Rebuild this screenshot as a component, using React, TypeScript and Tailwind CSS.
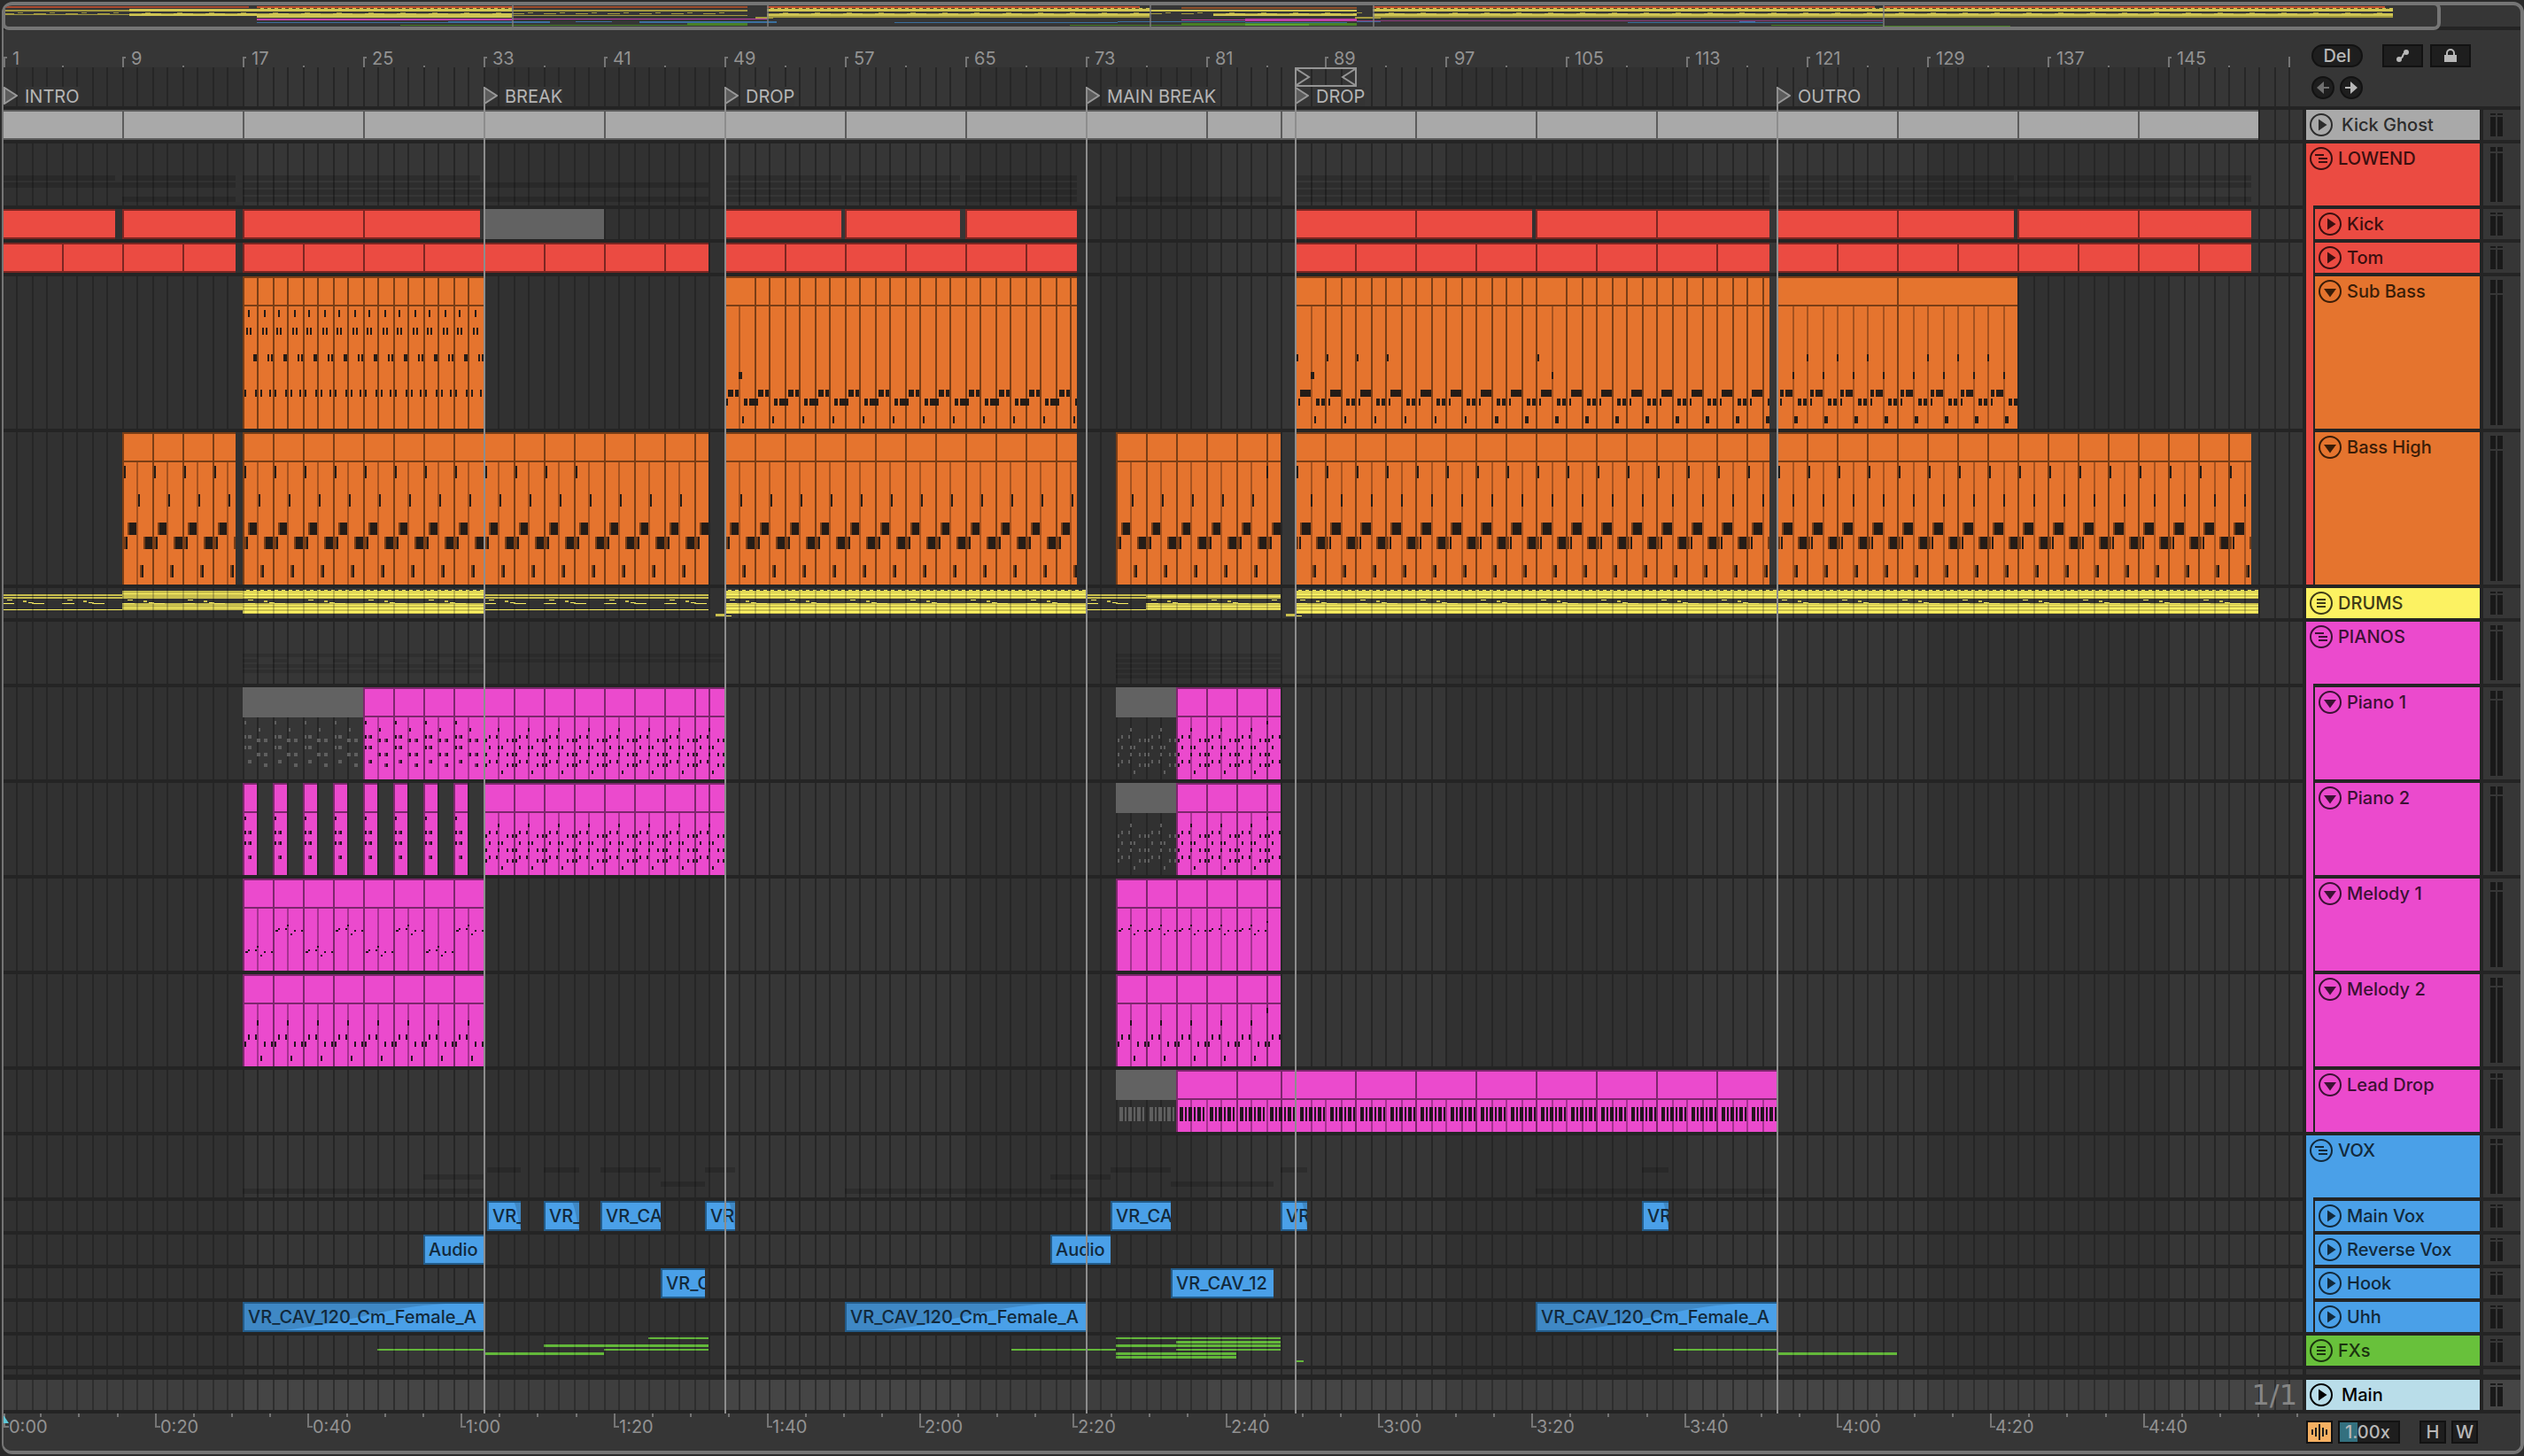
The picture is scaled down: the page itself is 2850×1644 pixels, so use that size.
import React from 'react';
import { clsx } from 'clsx';

type Box = [number, number, number, number];

interface Clip {
  start: number;
  end: number;
  // x positions of the dividers inside the clip
  cuts?: number[];
  muted?: boolean;
}

interface Palette {
  fill: string;
  edge: string;
  soft: string;
  note: string;
}

const LANE_LEFT = 4;
const LANE_WIDTH = 2596;
const BAR = 17;

// Bar number -> timeline x. The bar before 87 is two units short.
const barX = (bar: number) =>
  bar < 87 ? 2 * Math.floor((2 + BAR * (bar - 1)) / 2) : 2 * Math.ceil((BAR * (bar - 1)) / 2);

const pct = (x: number) => `${((x - LANE_LEFT) / LANE_WIDTH) * 100}%`;
const pctWidth = (w: number) => `${(w / LANE_WIDTH) * 100}%`;

const toPath = (boxes: Box[]) => boxes.map(([x, y, w, h]) => `M${x} ${y}h${w}v${h}h${-w}z`).join('');

const range = (from: number, to: number, step: number) => {
  const out: number[] = [];
  for (let x = from; x < to; x += step) out.push(x);
  return out;
};

const bars = range(1, 154, 1);
const gridPath = (h: number) => toPath(bars.map((b): Box => [barX(b), 0, 2, h]));
const bandPath = (h: number) =>
  toPath([17, 49, 81, 113, 145].map((b): Box => [barX(b), 0, b === 145 ? 152 : barX(b + 16) - barX(b), h]));

const palettes: Record<string, Palette> = {
  gray: { fill: '#a9a9a9', edge: '#5c5c5c', soft: '#7d7d7d', note: '#222222' },
  red: { fill: '#eb4b42', edge: '#7c2622', soft: '#a03630', note: '#222222' },
  orange: { fill: '#e5742e', edge: '#7a3e16', soft: '#a5521f', note: '#241c17' },
  pink: { fill: '#eb4acd', edge: '#7d276d', soft: '#a63391', note: '#24141f' },
};

const LaneGrid = ({ h, main = false }: { h: number; main?: boolean }) => (
  <>
    <rect x={0} y={0} width={2600} height={h} fill={main ? '#3e3e3e' : '#313131'} />
    <path d={bandPath(h)} fill={main ? '#454545' : '#363636'} />
    <path d={gridPath(h)} fill={main ? '#2e2e2e' : '#262626'} />
  </>
);

interface LaneProps {
  h: number;
  height: string;
  main?: boolean;
  children?: React.ReactNode;
  overlay?: React.ReactNode;
}

const Lane = ({ h, height, main, children, overlay }: LaneProps) => (
  <div className={clsx('relative w-full overflow-hidden', height)}>
    <svg
      className="block h-full w-full"
      viewBox={`${LANE_LEFT} 0 ${LANE_WIDTH} ${h}`}
      preserveAspectRatio="none"
      shapeRendering="crispEdges"
      aria-hidden="true"
    >
      <LaneGrid h={h} main={main} />
      {children}
    </svg>
    {overlay}
  </div>
);

// Folded audio clips: a filled block with dark edges
const FlatClips = ({ clips, palette }: { clips: Clip[]; palette: Palette }) => (
  <>
    {clips.map((c) =>
      c.muted ? (
        <rect key={c.start} x={c.start} y={0} width={c.end - c.start} height={34} fill="#626262" />
      ) : (
        <g key={c.start}>
          <rect x={c.start} y={0} width={c.end - c.start} height={34} fill={palette.edge} />
          <rect x={c.start + 2} y={2} width={c.end - c.start - 2} height={30} fill={palette.fill} />
          <path d={toPath((c.cuts ?? []).map((x): Box => [x, 2, 2, 30]))} fill={palette.edge} />
        </g>
      ),
    )}
  </>
);

interface NoteClipsProps {
  clips: Clip[];
  h: number;
  palette: Palette;
  notes: Box[];
  shades?: Box[];
}

const clipNotes = (boxes: Box[], clip: Clip) =>
  boxes
    .filter(([x]) => x >= clip.start && x < clip.end)
    .map(([x, y, w, hh]): Box => [x, y, Math.min(w, clip.end - x), hh]);

// Unfolded MIDI clips: title strip on top, notes under it
const NoteClips = ({ clips, h, palette, notes, shades = [] }: NoteClipsProps) => (
  <>
    {clips.map((c) => {
      const w = c.end - c.start;
      const inner = bars.map(barX).filter((x) => x > c.start && x < c.end);
      return c.muted ? (
        <g key={c.start}>
          <rect x={c.start} y={0} width={w} height={34} fill="#626262" />
          <path d={toPath(clipNotes([...shades, ...notes], c))} fill="#5f5f5f" />
        </g>
      ) : (
        <g key={c.start}>
          <rect x={c.start} y={0} width={w} height={h} fill={palette.edge} />
          <rect x={c.start + 2} y={2} width={w - 2} height={h - 2} fill={palette.fill} />
          <path d={toPath(inner.map((x): Box => [x, 34, 2, h - 34]))} fill={palette.soft} />
          <path d={toPath((c.cuts ?? []).map((x): Box => [x, 2, 2, h - 2]))} fill={palette.edge} />
          <rect x={c.start} y={32} width={w} height={2} fill={palette.edge} />
          <path d={toPath(clipNotes(shades, c))} fill={palette.edge} />
          <path d={toPath(clipNotes(notes, c))} fill={palette.note} />
        </g>
      );
    })}
  </>
);

// Repeats a two-bar pattern from one x to another
const repeat = (pattern: Box[], from: number, to: number): Box[] =>
  range(from, to, BAR * 2).flatMap((x0) => pattern.map(([x, y, w, h]): Box => [x0 + x, y, w, h]));

const at = (y: number, h: number, xs: [number, number][]): Box[] => xs.map(([x, w]): Box => [x, y, w, h]);

const pairCuts = (from: number, to: number) => range(from + 34, to, 34);

/* ---- Kick Ghost / Kick / Tom ---- */
const ghostClips: Clip[] = [
  { start: 2, end: 1462, cuts: [...range(138, 1400, 136), 1446] },
  { start: 1462, end: 2550, cuts: range(1598, 2500, 136) },
];

const kickClips: Clip[] = [
  { start: 2, end: 130 },
  { start: 138, end: 266 },
  { start: 274, end: 542, cuts: [410] },
  { start: 546, end: 682, muted: true },
  { start: 818, end: 950 },
  { start: 954, end: 1084 },
  { start: 1090, end: 1216 },
  { start: 1462, end: 1730, cuts: [1598] },
  { start: 1734, end: 1998, cuts: [1870] },
  { start: 2006, end: 2274, cuts: [2142] },
  { start: 2278, end: 2542, cuts: [2414] },
];

const tomClips: Clip[] = [[2, 266], [274, 800], [818, 1216], [1462, 1998], [2006, 2542]].map(([start, end]) => ({
  start,
  end,
  cuts: range(start + 68, end, 68),
}));

/* ---- Sub Bass ---- */
const barCuts = (from: number, to: number) => bars.map(barX).filter((x) => x > from && x < to);

const subClips: Clip[] = [
  { start: 274, end: 546, cuts: barCuts(274, 546) },
  { start: 818, end: 1216, cuts: barCuts(836, 1216) },
  { start: 1462, end: 1998, cuts: barCuts(1482, 1998).filter((x) => x !== 1752) },
  { start: 2006, end: 2278, cuts: [2142] },
];

const subNotes: Box[] = [
  ...repeat(
    [
      ...at(38, 8, [[6, 2], [24, 2]]),
      ...at(58, 8, [[4, 2], [8, 2], [22, 2], [26, 2]]),
      ...at(88, 8, [[12, 4], [28, 2], [32, 2]]),
      ...at(128, 8, [[2, 2], [14, 2], [20, 2], [30, 2]]),
    ],
    274,
    546,
  ),
  ...at(108, 8, [[834, 4]]),
  ...at(138, 8, [[820, 2]]),
  ...repeat(
    [...at(128, 8, [[4, 6], [12, 4]]), ...at(138, 8, [[22, 4], [28, 10]]), ...at(158, 8, [[20, 2]])],
    818,
    1216,
  ),
  ...at(88, 8, [[1464, 2], [1498, 2], [1532, 2], [1566, 2], [1736, 2]]),
  ...at(108, 8, [[1480, 4], [1752, 2]]),
  ...repeat([...at(128, 8, [[6, 12]]), ...at(138, 8, [[4, 2], [24, 4], [30, 4]])], 1462, 1998),
  ...range(1484, 1688, 34).map((x): Box => [x, 158, 2, 8]),
  ...range(1688, 1998, 34).map((x): Box => [x, 158, 4, 8]),
  ...at(88, 8, [[2040, 2], [2074, 2], [2108, 2], [2176, 2], [2210, 2], [2244, 2]]),
  ...repeat(
    [
      ...at(108, 8, [[18, 2]]),
      ...at(128, 8, [[4, 4], [10, 8]]),
      ...at(138, 8, [[4, 2], [24, 4], [30, 4]]),
      ...at(158, 8, [[20, 4]]),
    ],
    2006,
    2278,
  ),
];

/* ---- Bass High ---- */
const highClips: Clip[] = [[138, 266], [274, 800], [818, 1216], [1260, 1446], [1462, 1998], [2006, 2542]].map(
  ([start, end]) => ({ start, end, cuts: pairCuts(start, end) }),
);

const highEarly: Box[] = [
  ...at(70, 14, [[18, 2]]),
  ...at(102, 14, [[8, 8]]),
  ...at(118, 14, [[4, 2], [26, 8]]),
  ...at(150, 14, [[22, 2]]),
];
const highLate: Box[] = [
  ...at(70, 14, [[18, 2]]),
  ...at(102, 14, [[8, 10]]),
  ...at(118, 14, [[5, 2], [26, 8]]),
  ...at(150, 14, [[22, 2]]),
];
const highShade: Box[] = [
  ...at(102, 14, [[6, 2]]),
  ...at(118, 14, [[2, 2], [24, 2]]),
  ...at(150, 14, [[20, 2]]),
];

const highNotes: Box[] = [
  ...repeat(highEarly, 138, 266),
  ...repeat(highEarly, 274, 800),
  ...repeat(highEarly, 818, 1216),
  ...repeat(highEarly, 1260, 1446),
  ...repeat(highLate, 1462, 1998),
  ...repeat(highLate, 2006, 2542),
  ...[
    ...range(140, 266, 34),
    ...range(276, 660, 34),
    1430,
    ...range(1464, 1998, 34),
    ...range(2008, 2542, 34),
  ].map((x): Box => [x, 38, 2, 14]),
];
const highShades: Box[] = [138, 274, 818, 1260, 1462, 2006].flatMap((x, i) =>
  repeat(highShade, x, highClips[i].end),
);

/* ---- Pianos ---- */
const chordA: Box[] = [
  ...at(38, 4, [[2, 2]]),
  ...at(46, 4, [[18, 2]]),
  ...at(54, 4, [[2, 2], [8, 2]]),
  ...at(58, 4, [[18, 2], [26, 2]]),
  ...at(66, 4, [[2, 2], [8, 2]]),
  ...at(74, 4, [[18, 2], [26, 2]]),
  ...at(82, 4, [[8, 2]]),
  ...at(86, 4, [[26, 2]]),
];
const chordAShade: Box[] = [
  ...at(54, 4, [[6, 2]]),
  ...at(58, 4, [[16, 2], [24, 2]]),
  ...at(66, 4, [[6, 2]]),
  ...at(74, 4, [[16, 2], [24, 2]]),
  ...at(82, 4, [[6, 2]]),
  ...at(86, 4, [[24, 2]]),
];
const chordB: Box[] = [
  ...at(46, 4, [[16, 2]]),
  ...at(54, 4, [[6, 2], [14, 2]]),
  ...at(58, 4, [[2, 2], [26, 2], [32, 2]]),
  ...at(66, 4, [[6, 2], [16, 2], [20, 2]]),
  ...at(74, 4, [[2, 2], [16, 2], [26, 2], [32, 2]]),
  ...at(82, 4, [[6, 2], [14, 2]]),
  ...at(86, 4, [[2, 2], [26, 2], [32, 2]]),
  ...at(94, 4, [[20, 2]]),
];

const pianoNotes: Box[] = [
  ...repeat(chordA, 274, 546),
  ...repeat(chordB, 546, 818),
  ...repeat(chordB, 1260, 1446),
  [1430, 38, 2, 4],
];
const pianoShades = repeat(chordAShade, 274, 546);

const piano1Clips: Clip[] = [
  { start: 274, end: 410, muted: true },
  { start: 410, end: 818, cuts: [...pairCuts(410, 818), 800] },
  { start: 1260, end: 1328, muted: true },
  { start: 1328, end: 1446, cuts: pairCuts(1328, 1446) },
];
const piano2Clips: Clip[] = [
  ...range(274, 546, 34).map((x) => ({ start: x, end: x + 16 })),
  { start: 546, end: 818, cuts: [...pairCuts(546, 818), 800] },
  { start: 1260, end: 1328, muted: true },
  { start: 1328, end: 1446, cuts: pairCuts(1328, 1446) },
];

const melodyClips: Clip[] = [
  { start: 274, end: 546, cuts: pairCuts(274, 546) },
  { start: 1260, end: 1446, cuts: pairCuts(1260, 1446) },
];
const riff = (y: number): Box[] => [
  ...at(y, 2, [[3, 3], [24, 2], [32, 2]]),
  ...at(y - 2, 2, [[6, 2], [14, 2]]),
  ...at(y - 6, 2, [[16, 2]]),
  ...at(y + 4, 2, [[20, 2]]),
];
const melody1Notes: Box[] = [
  ...range(274, 546, 68).flatMap((x) => [...repeat(riff(82), x, x + 34), ...repeat(riff(58), x + 34, x + 68)]),
  ...repeat(riff(58), 1260, 1430),
  [1430, 48, 2, 2],
];
const stabs: Box[] = [
  ...at(52, 6, [[16, 2]]),
  ...at(68, 6, [[6, 2], [14, 2]]),
  ...at(76, 6, [[2, 2], [24, 2], [32, 2]]),
  ...at(92, 6, [[20, 2]]),
];
const melody2Notes: Box[] = [...repeat(stabs, 274, 546), ...repeat(stabs, 1260, 1446), [1430, 38, 2, 6]];

const leadClips: Clip[] = [
  { start: 1260, end: 1328, muted: true },
  { start: 1328, end: 2006, cuts: [1396, 1446, ...range(1530, 2000, 68)] },
];
const leadNotes: Box[] = repeat(
  at(42, 16, [[4, 4], [10, 2], [14, 4], [20, 2], [24, 4], [30, 2]]),
  1260,
  2006,
);

/* ---- Vox ---- */
interface AudioClip {
  start: number;
  end: number;
  name: string;
  fade?: 'in' | 'out';
}

const mainVox: AudioClip[] = [
  { start: 550, end: 588, name: 'VR_', fade: 'out' },
  { start: 614, end: 654, name: 'VR_', fade: 'out' },
  { start: 678, end: 746, name: 'VR_CA' },
  { start: 796, end: 830, name: 'VR', fade: 'out' },
  { start: 1254, end: 1322, name: 'VR_CA' },
  { start: 1446, end: 1476, name: 'VR', fade: 'out' },
  { start: 1854, end: 1884, name: 'VR', fade: 'out' },
];
const reverseVox: AudioClip[] = [
  { start: 478, end: 546, name: 'Audio' },
  { start: 1186, end: 1254, name: 'Audio' },
];
const hookVox: AudioClip[] = [
  { start: 746, end: 796, name: 'VR_C' },
  { start: 1322, end: 1438, name: 'VR_CAV_12' },
];
const uhhVox: AudioClip[] = [274, 954, 1734].map((start) => ({
  start,
  end: start + 272,
  name: 'VR_CAV_120_Cm_Female_A',
  fade: 'in',
}));

const AudioClips = ({ clips }: { clips: AudioClip[] }) => (
  <>
    {clips.map((c) => (
      <div
        key={c.start}
        className="absolute inset-y-0 overflow-hidden border-y-2 border-l-2 border-[#235c8a] bg-[#4aa0e8]"
        style={{ left: pct(c.start), width: pctWidth(c.end - c.start) }}
      >
        {c.fade && (
          <svg className="absolute inset-0 h-full w-full" viewBox="0 0 100 30" preserveAspectRatio="none" aria-hidden="true">
            <path
              d={c.fade === 'in' ? 'M0 0H84C58 4 44 22 16 30H0Z' : 'M80 0H100V30C94 24 90 8 80 0Z'}
              fill="#3f88c5"
            />
          </svg>
        )}
        <span className="relative block pl-1 text-xl leading-[30px] font-medium whitespace-nowrap text-[#12293b]">
          {c.name}
        </span>
      </div>
    ))}
  </>
);

/* ---- Folded group lanes ---- */
const drumSections: { from: number; to: number; kind: 'thin' | 'mid' | 'full' | 'block' }[] = [
  { from: 2, to: 138, kind: 'thin' },
  { from: 138, to: 274, kind: 'mid' },
  { from: 274, to: 546, kind: 'full' },
  { from: 546, to: 800, kind: 'thin' },
  { from: 818, to: 1226, kind: 'full' },
  { from: 1226, to: 1294, kind: 'thin' },
  { from: 1294, to: 1446, kind: 'block' },
  { from: 1462, to: 2550, kind: 'full' },
];

const drumBoxes = (): { dim: Box[]; lit: Box[] } => {
  const dim: Box[] = [];
  const lit: Box[] = [];
  drumSections.forEach(({ from, to, kind }) => {
    const w = to - from;
    if (kind === 'thin') {
      dim.push([from, 7, w, 2], [from, 10, w, 2]);
      lit.push([from, 24, w, 1]);
      range(from, to, 34).forEach((x) => lit.push([x, 17, Math.min(14, to - x), 1]));
    }
    if (kind === 'mid') {
      dim.push([from, 3, w, 9], [from, 17, w, 8]);
      lit.push([from, 6, w, 1], [from, 22, w, 1]);
    }
    if (kind === 'block') {
      dim.push([from, 7, w, 5], [from, 17, w, 8]);
      lit.push([from, 9, w, 1], [from, 20, w, 1], [from, 23, w, 1]);
    }
    if (kind === 'full') {
      dim.push([from, 3, w, 9], [from, 17, w, 12]);
      lit.push([from, 4, w, 1], [from, 6, w, 2], [from, 10, w, 1]);
      lit.push([from, 19, w, 1], [from, 22, w, 2], [from, 26, w, 2]);
      range(from + 4, to, 8).forEach((x) => lit.push([x, 2, 4, 1]));
    }
    if (kind !== 'thin') range(from, to, 34).forEach((x) => lit.push([x, 17, Math.min(14, to - x), 1]));
    range(from + 6, to, 68).forEach((x) => {
      lit.push([x, 13, Math.min(6, to - x), 1]);
      if (x + 30 < to) {
        dim.push([x + 18, 14, 4, 2]);
        lit.push([x + 24, 16, 6, 1]);
      }
    });
  });
  [808, 1452].forEach((x) => {
    dim.push([x, 29, 12, 3]);
    lit.push([x + 10, 31, 8, 1]);
  });
  return { dim, lit };
};

const drums = drumBoxes();

const fxLines: Box[] = [
  [426, 15, 120, 2], [548, 19, 134, 3], [614, 10, 186, 3], [682, 15, 118, 2], [732, 2, 68, 2],
  [1142, 15, 118, 2], [1260, 2, 186, 2], [1328, 6, 118, 3], [1260, 10, 186, 3], [1328, 15, 118, 2],
  [1260, 19, 136, 3], [1260, 23, 136, 3], [1464, 28, 8, 2], [1890, 15, 116, 2], [2008, 19, 134, 3],
];

const shadow = (clips: { start: number; end: number }[], y: number, h: number): Box[] =>
  clips.map((c): Box => [c.start, y, c.end - c.start, h]);

const lowendShadow = toPath([
  ...shadow(kickClips.filter((c) => !c.muted), 36, 6),
  ...shadow(tomClips, 44, 6),
  ...shadow(subClips, 52, 6),
  ...shadow(highClips, 60, 6),
]);
const pianoShadow = toPath([
  ...shadow(piano1Clips, 36, 4),
  ...shadow(piano2Clips, 42, 4),
  ...shadow(melodyClips, 48, 4),
  ...shadow(melodyClips, 54, 4),
  ...shadow(leadClips, 60, 4),
]);
const voxShadow = toPath([
  ...shadow(mainVox, 36, 6),
  ...shadow(reverseVox, 44, 6),
  ...shadow(hookVox, 52, 6),
  ...shadow(uhhVox, 60, 6),
]);

/* ---- Overview ---- */
const overX = (bar: number) => 2 + 18 * (bar - 1);

const overview: [string, number, number, number, number][] = [
  // colour, from bar, to bar, y, height
  ['#a9492f', 1, 16.5, 1, 2],
  ['#c4522f', 17, 33, 1, 3],
  ['#9b4a2b', 33, 47.8, 1, 2],
  ['#c4522f', 49, 72.4, 1, 2],
  ['#8e4f2a', 75, 86, 2, 2],
  ['#c4522f', 87, 118.5, 1, 2],
  ['#c4522f', 119, 150.5, 1, 2],
  ['#a39a40', 1, 9, 5, 2], ['#a39a40', 1, 9, 10, 1],
  ['#cfc553', 9, 17, 4, 3], ['#cfc553', 9, 17, 9, 3],
  ['#cfc553', 17, 33, 3, 4], ['#cfc553', 17, 33, 9, 5],
  ['#a39a40', 33, 47.8, 5, 2], ['#a39a40', 33, 47.8, 11, 1],
  ['#cfc553', 49, 73, 3, 4], ['#cfc553', 49, 73, 9, 4], ['#a39a40', 49, 73, 12, 2],
  ['#cfc553', 73, 86, 5, 2], ['#cfc553', 77, 86, 9, 3],
  ['#cfc553', 87, 151, 3, 4], ['#cfc553', 87, 151, 9, 4], ['#a39a40', 87, 151, 12, 2],
  ['#a39a40', 48.3, 49.4, 13, 2], ['#a39a40', 85.9, 87.5, 13, 2],
  ['#c23fa8', 17, 33, 15, 2], ['#c23fa8', 33, 49, 15, 1],
  ['#c23fa8', 75, 79, 16, 1], ['#c23fa8', 79, 86, 15, 3], ['#8b3a7b', 86, 119, 17, 1],
  ['#3a6f9e', 17, 29, 19, 1], ['#3a6f9e', 29, 35.4, 18, 2], ['#3a6f9e', 37, 39.3, 18, 1],
  ['#3a6f9e', 41, 49.6, 18, 2], ['#3a6f9e', 57, 71, 19, 1], ['#3a6f9e', 71, 79, 18, 1],
  ['#3a6f9e', 79, 85.4, 19, 1], ['#3a6f9e', 86, 87.5, 18, 1], ['#3a6f9e', 103, 119, 19, 1], ['#3a6f9e', 110, 111, 18, 1],
  ['#487f25', 26, 33, 22, 1], ['#487f25', 33, 47.8, 22, 1], ['#487f25', 44, 47.8, 20, 3],
  ['#487f25', 68, 75, 22, 1], ['#487f25', 75, 86, 20, 3], ['#5ba32d', 79, 83, 21, 2],
  ['#487f25', 112, 119, 22, 1], ['#487f25', 119, 127, 23, 1],
];

const Overview = () => (
  <div className="relative h-7 border-b-4 border-[#242424]">
    <div className="mr-[94px] h-6">
      <svg className="block h-full w-full" viewBox="4 0 2748 24" preserveAspectRatio="none" shapeRendering="crispEdges" aria-hidden="true">
        {overview.map(([color, from, to, y, h], i) => (
          <rect key={i} x={overX(from)} y={y} width={18 * (to - from)} height={h} fill={color} />
        ))}
        <path
          d={toPath(
            [[17, 33], [49, 73], [87, 151]].flatMap(([from, to]) =>
              range(overX(from), overX(to), 8).map((x): Box => [x, 3, 4, 1]),
            ),
          )}
          fill="#4a4320"
        />
        <path
          d={toPath(
            [[1, 47], [49, 86], [87, 150]].flatMap(([from, to]) =>
              range(overX(from), overX(to), 36).flatMap((x): Box[] => [[x, 9, 14, 1], [x + 18, 8, 6, 1]]),
            ),
          )}
          fill="#a39a40"
        />
        <path d={toPath([33, 49, 73, 87, 119].map((b): Box => [overX(b), 0, 2, 24]))} fill="#808080" fillOpacity={0.7} />
      </svg>
    </div>
    <div className="absolute -top-1 right-[90px] -bottom-1 -left-0.5 rounded-lg border-4 border-[#757575]" />
  </div>
);

/* ---- Rulers ---- */
const locators = [
  { bar: 1, name: 'INTRO' },
  { bar: 33, name: 'BREAK' },
  { bar: 49, name: 'DROP' },
  { bar: 73, name: 'MAIN BREAK' },
  { bar: 87, name: 'DROP' },
  { bar: 119, name: 'OUTRO' },
];

const numbered = range(1, 146, 8);
const minor = range(5, 152, 8);

const BarRuler = () => (
  <div className="min-w-0 flex-1">
    <div className="relative h-[42px] text-xl text-[#929292]">
      {numbered.map((b) => (
        <div
          key={b}
          className="absolute bottom-0 h-3 border-l-2 border-[#757575]"
          style={{ left: pct(Math.max(barX(b), 4)) }}
        >
          <div className="h-0.5 w-0.5 bg-[#757575]" />
          <span className="absolute -top-2 left-2 leading-5">{b}</span>
        </div>
      ))}
      <div className="absolute bottom-0 h-3 border-l-2 border-[#757575]" style={{ left: pct(barX(153)) }} />
      {minor.map((b) => (
        <div key={b} className="absolute bottom-0 h-0.5 w-0.5 bg-[#757575]" style={{ left: pct(barX(b)) }} />
      ))}
    </div>
    <Lane
      h={44}
      height="h-11"
      overlay={
        <>
          <div
            className="absolute top-0 flex h-[22px] justify-between border-2 border-[#959595]"
            style={{ left: pct(1462), width: pctWidth(70) }}
          >
            <svg className="h-full w-4" viewBox="0 0 16 18" fill="none" stroke="#959595" strokeWidth="2" aria-hidden="true">
              <path d="M0 0L14 9L0 18" />
            </svg>
            <svg className="h-full w-4" viewBox="0 0 16 18" fill="none" stroke="#959595" strokeWidth="2" aria-hidden="true">
              <path d="M16 0L2 9L16 18" />
            </svg>
          </div>
          {locators.map((l) => (
            <button
              key={l.bar}
              type="button"
              className="absolute top-[22px] flex items-start gap-2"
              style={{ left: pct(Math.max(barX(l.bar), 4)) }}
            >
              <svg className="h-5 w-4" viewBox="0 0 16 20" aria-hidden="true">
                <path d="M1 1L15 10L1 19Z" fill="#5c5c5c" stroke="#999999" strokeWidth="2" />
              </svg>
              <span className="bg-[#343434] text-xl leading-[22px] text-[#b5b5b5]">{l.name}</span>
            </button>
          ))}
        </>
      }
    />
  </div>
);

const TimeRuler = () => {
  const timeX = (seconds: number) => 2 + (seconds / 20) * 172.7;
  const label = (s: number) => `${Math.floor(s / 60)}:${String(s % 60).padStart(2, '0')}`;
  return (
    <div className="relative h-[42px] min-w-0 flex-1 bg-[#363636] text-xl text-[#929292]">
      {range(0, 301, 5).map((s) =>
        s % 20 === 0 && s < 300 ? (
          <div
            key={s}
            className="absolute top-0 h-4 border-l-2 border-[#757575]"
            style={{ left: pct(Math.max(Math.round(timeX(s)), 4)) }}
          >
            <div className="absolute bottom-0 h-0.5 w-1 bg-[#757575]" />
            <span className="absolute top-[3px] left-1 leading-6">{label(s)}</span>
          </div>
        ) : (
          <div key={s} className="absolute top-0 h-1 w-0.5 bg-[#757575]" style={{ left: pct(Math.round(timeX(s))) }} />
        ),
      )}
      <svg className="absolute top-0.5 left-0 h-2.5 w-1.5" viewBox="0 0 6 10" aria-hidden="true">
        <path d="M0 0L6 9H0Z" fill="#5ec8d8" />
      </svg>
    </div>
  );
};

/* ---- Icons ---- */
type IconKind = 'play' | 'unfold' | 'group' | 'list';

const TrackIcon = ({ kind }: { kind: IconKind }) => (
  <svg className="size-[26px] shrink-0" viewBox="0 0 26 26" fill="none" stroke="currentColor" strokeWidth="2" aria-hidden="true">
    <circle cx="13" cy="13" r="12" />
    {kind === 'play' && <path d="M10 6.5V19.5L19.5 13Z" fill="currentColor" stroke="none" />}
    {kind === 'unfold' && <path d="M6 10H20L13 19.5Z" fill="currentColor" stroke="none" />}
    {kind === 'group' && <path d="M6 9H16M10 13H20M10 17H20" />}
    {kind === 'list' && <path d="M8 9H18M8 13H18M8 17H18" />}
  </svg>
);

/* ---- Track headers ---- */
interface Track {
  name: string;
  icon: IconKind;
  height: string;
  color: string;
  wide?: boolean;
}

interface Group extends Track {
  children?: Track[];
}

const RED = 'bg-[#eb4b42] text-[#3b0f0f]';
const ORANGE = 'bg-[#e5742e] text-[#3a1d08]';
const PINK = 'bg-[#eb4acd] text-[#3c1134]';
const BLUE = 'bg-[#4aa0e8] text-[#12293b]';

const groups: Group[] = [
  { name: 'Kick Ghost', icon: 'play', height: 'h-[34px]', color: 'bg-[#a9a9a9] text-[#2c2c2c]', wide: true },
  {
    name: 'LOWEND',
    icon: 'group',
    height: 'h-[70px]',
    color: RED,
    children: [
      { name: 'Kick', icon: 'play', height: 'h-[34px]', color: RED },
      { name: 'Tom', icon: 'play', height: 'h-[34px]', color: RED },
      { name: 'Sub Bass', icon: 'unfold', height: 'h-[172px]', color: ORANGE },
      { name: 'Bass High', icon: 'unfold', height: 'h-[172px]', color: ORANGE },
    ],
  },
  { name: 'DRUMS', icon: 'list', height: 'h-[34px]', color: 'bg-[#fcf262] text-[#3e3b17]' },
  {
    name: 'PIANOS',
    icon: 'group',
    height: 'h-[70px]',
    color: PINK,
    children: [
      { name: 'Piano 1', icon: 'unfold', height: 'h-[104px]', color: PINK },
      { name: 'Piano 2', icon: 'unfold', height: 'h-[104px]', color: PINK },
      { name: 'Melody 1', icon: 'unfold', height: 'h-[104px]', color: PINK },
      { name: 'Melody 2', icon: 'unfold', height: 'h-[104px]', color: PINK },
      { name: 'Lead Drop', icon: 'unfold', height: 'h-[70px]', color: PINK },
    ],
  },
  {
    name: 'VOX',
    icon: 'group',
    height: 'h-[70px]',
    color: BLUE,
    children: [
      { name: 'Main Vox', icon: 'play', height: 'h-[34px]', color: BLUE },
      { name: 'Reverse Vox', icon: 'play', height: 'h-[34px]', color: BLUE },
      { name: 'Hook', icon: 'play', height: 'h-[34px]', color: BLUE },
      { name: 'Uhh', icon: 'play', height: 'h-[34px]', color: BLUE },
    ],
  },
  { name: 'FXs', icon: 'list', height: 'h-[34px]', color: 'bg-[#68c13b] text-[#1b330f]' },
];

const mainTrack: Track = {
  name: 'Main',
  icon: 'play',
  height: 'h-[34px]',
  color: 'bg-[#b9dde9] text-black',
  wide: true,
};

const TrackHeader = ({ track }: { track: Track }) => (
  <div className={clsx('flex items-start p-1 font-medium', track.wide ? 'gap-2.5' : 'gap-1.5', track.height, track.color)}>
    <button type="button" aria-label={`Fold ${track.name}`}>
      <TrackIcon kind={track.icon} />
    </button>
    <span className="text-xl leading-[26px] whitespace-nowrap">{track.name}</span>
  </div>
);

const Headers = () => (
  <div className="flex w-[196px] shrink-0 flex-col gap-1">
    {groups.map((g) => (
      <div key={g.name}>
        <TrackHeader track={g} />
        {g.children && (
          <div className={clsx('pl-2', g.color)}>
            <div className="flex flex-col gap-1 bg-[#242424] pt-1 pl-0.5">
              {g.children.map((t) => (
                <TrackHeader key={t.name} track={t} />
              ))}
            </div>
          </div>
        )}
      </div>
    ))}
    <div className="h-1.5 bg-[#363636]" />
    <div className="pt-0.5">
      <TrackHeader track={mainTrack} />
    </div>
  </div>
);

const Meter = ({ height, main = false }: { height: string; main?: boolean }) => (
  <div className={clsx('flex gap-0.5 py-1 pl-2', height, main ? 'bg-[#454545]' : 'bg-[#363636]')}>
    {[0, 1].map((i) => (
      <div key={i} className="flex w-1.5 flex-col gap-0.5">
        <div className="grow bg-[#191919]" />
        <div className="grow-[10] bg-[#191919]" />
      </div>
    ))}
  </div>
);

const Meters = () => (
  <div className="flex w-[42px] shrink-0 flex-col gap-1">
    {groups
      .flatMap((g) => [g, ...(g.children ?? [])])
      .map((t) => (
        <Meter key={t.name} height={t.height} />
      ))}
    <div className="h-1.5 bg-[#363636]" />
    <div className="pt-0.5">
      <Meter height="h-[34px]" main />
    </div>
  </div>
);

const Lanes = () => (
  <div className="relative flex min-w-0 flex-1 flex-col gap-1">
    <Lane h={34} height="h-[34px]">
      <FlatClips clips={ghostClips} palette={palettes.gray} />
    </Lane>
    <Lane h={70} height="h-[70px]">
      <path d={lowendShadow} fill="#000000" fillOpacity={0.15} />
    </Lane>
    <Lane h={34} height="h-[34px]">
      <FlatClips clips={kickClips} palette={palettes.red} />
    </Lane>
    <Lane h={34} height="h-[34px]">
      <FlatClips clips={tomClips} palette={palettes.red} />
    </Lane>
    <Lane h={172} height="h-[172px]">
      <NoteClips clips={subClips} h={172} palette={palettes.orange} notes={subNotes} />
    </Lane>
    <Lane h={172} height="h-[172px]">
      <NoteClips clips={highClips} h={172} palette={palettes.orange} notes={highNotes} shades={highShades} />
    </Lane>
    <Lane h={34} height="h-[34px]">
      <path d={toPath(drums.dim)} fill="#c9bf4e" />
      <path d={toPath(drums.lit)} fill="#fcf262" />
      <path d={gridPath(34)} fill="#262626" fillOpacity={0.25} />
    </Lane>
    <Lane h={70} height="h-[70px]">
      <path d={pianoShadow} fill="#000000" fillOpacity={0.12} />
    </Lane>
    <Lane h={104} height="h-[104px]">
      <NoteClips clips={piano1Clips} h={104} palette={palettes.pink} notes={pianoNotes} shades={pianoShades} />
    </Lane>
    <Lane h={104} height="h-[104px]">
      <NoteClips clips={piano2Clips} h={104} palette={palettes.pink} notes={pianoNotes} shades={pianoShades} />
    </Lane>
    <Lane h={104} height="h-[104px]">
      <NoteClips clips={melodyClips} h={104} palette={palettes.pink} notes={melody1Notes} />
    </Lane>
    <Lane h={104} height="h-[104px]">
      <NoteClips clips={melodyClips} h={104} palette={palettes.pink} notes={melody2Notes} />
    </Lane>
    <Lane h={70} height="h-[70px]">
      <NoteClips clips={leadClips} h={70} palette={palettes.pink} notes={leadNotes} />
    </Lane>
    <Lane h={70} height="h-[70px]">
      <path d={voxShadow} fill="#000000" fillOpacity={0.15} />
    </Lane>
    <Lane h={34} height="h-[34px]" overlay={<AudioClips clips={mainVox} />} />
    <Lane h={34} height="h-[34px]" overlay={<AudioClips clips={reverseVox} />} />
    <Lane h={34} height="h-[34px]" overlay={<AudioClips clips={hookVox} />} />
    <Lane h={34} height="h-[34px]" overlay={<AudioClips clips={uhhVox} />} />
    <Lane h={34} height="h-[34px]">
      <path d={toPath(fxLines)} fill="#63b83a" />
      <path d={gridPath(34)} fill="#262626" fillOpacity={0.2} />
    </Lane>
    <Lane h={6} height="h-1.5" />
    <div className="pt-0.5">
      <Lane
        h={34}
        height="h-[34px]"
        main
        overlay={
          <span className="absolute top-0 right-1.5 font-['DejaVu_Sans',sans-serif] text-[32px] leading-[34px] text-[#858585]">
            1/1
          </span>
        }
      />
    </div>
    {/* Locator lines run over every track */}
    {locators.slice(1).map((l) => (
      <div
        key={l.bar}
        className="absolute -top-6 -bottom-1 w-0.5 bg-[#8d8d8d]"
        style={{ left: pct(barX(l.bar)) }}
      />
    ))}
  </div>
);

const darkButton =
  'flex items-center justify-center border-2 border-[#121212] bg-[#1e1e1e] font-medium text-[#b8b8b8]';

const TopControls = () => (
  <div className="flex w-[246px] shrink-0 flex-col gap-2.5 pt-4 pl-2.5">
    <div className="flex gap-2">
      <button type="button" className={clsx(darkButton, 'mr-3.5 h-[26px] w-[58px] rounded-full text-xl leading-5')}>
        Del
      </button>
      <button type="button" aria-label="Automation mode" className={clsx(darkButton, 'h-[26px] w-[46px]')}>
        <svg className="h-4 w-4" viewBox="0 0 16 16" aria-hidden="true">
          <path d="M3.5 12.5L7.5 9.5L9 6L12.5 3.5" stroke="currentColor" strokeWidth="2" fill="none" />
          <circle cx="4" cy="12" r="3" fill="currentColor" />
          <circle cx="12" cy="4" r="3" fill="currentColor" />
        </svg>
      </button>
      <button type="button" aria-label="Lock envelopes" className={clsx(darkButton, 'h-[26px] w-[46px]')}>
        <svg className="h-4 w-4" viewBox="0 0 16 16" aria-hidden="true">
          <path d="M4 8V5A4 4 0 0 1 12 5V8" stroke="currentColor" strokeWidth="2" fill="none" />
          <rect x="1" y="7" width="14" height="8" fill="currentColor" />
        </svg>
      </button>
    </div>
    <div className="flex gap-1.5">
      <button type="button" aria-label="Previous locator" className={clsx(darkButton, 'size-[26px] rounded-full')}>
        <svg className="h-3.5 w-4 shrink-0 text-[#6f6f6f]" viewBox="0 0 16 14" aria-hidden="true">
          <path d="M1 7L9 0V14ZM8 6H15V8H8Z" fill="currentColor" />
        </svg>
      </button>
      <button type="button" aria-label="Next locator" className={clsx(darkButton, 'size-[26px] rounded-full')}>
        <svg className="h-3.5 w-4 shrink-0" viewBox="0 0 16 14" aria-hidden="true">
          <path d="M15 7L7 0V14ZM8 6H1V8H8Z" fill="currentColor" />
        </svg>
      </button>
    </div>
  </div>
);

const BottomControls = () => (
  <div className="flex w-[246px] shrink-0 items-start bg-[#363636] pt-2 pl-1">
    <button
      type="button"
      aria-label="Waveform zoom"
      className="flex h-[26px] w-[30px] items-center justify-center border-2 border-[#121212] bg-[#f6b062]"
    >
      <svg className="h-[18px] w-[18px]" viewBox="0 0 18 18" stroke="#1c1c1c" strokeWidth="2" aria-hidden="true">
        <path d="M1 6V12M5 4V14M9 0V18M13 4V14M17 6V12" />
      </svg>
    </button>
    <input
      aria-label="Track height"
      defaultValue="1.00x"
      className="ml-1.5 h-[26px] w-[70px] border-2 border-[#121212] bg-[#1e1e1e] bg-linear-to-r from-[#33707f] from-30% to-transparent to-30% pl-1.5 text-xl leading-[22px] font-medium text-[#b8b8b8]"
    />
    <button type="button" className={clsx(darkButton, 'ml-[22px] h-[26px] w-[30px] text-xl leading-5')}>
      H
    </button>
    <button type="button" className={clsx(darkButton, 'ml-1.5 h-[26px] w-[30px] text-xl leading-5')}>
      W
    </button>
  </div>
);

const App = () => (
  <div className="bg-[#2a2a2a] py-0.5 pl-0.5 font-['Inter','Liberation_Sans',sans-serif]">
    <div className="overflow-hidden rounded-xl border-4 border-l-2 border-[#757575] bg-[#363636]">
      <Overview />
      <div className="flex">
        <BarRuler />
        <TopControls />
      </div>
      <div className="flex gap-1 bg-[#242424] py-1">
        <Lanes />
        <Headers />
        <Meters />
      </div>
      <div className="flex">
        <TimeRuler />
        <BottomControls />
      </div>
    </div>
  </div>
);

export default App;
